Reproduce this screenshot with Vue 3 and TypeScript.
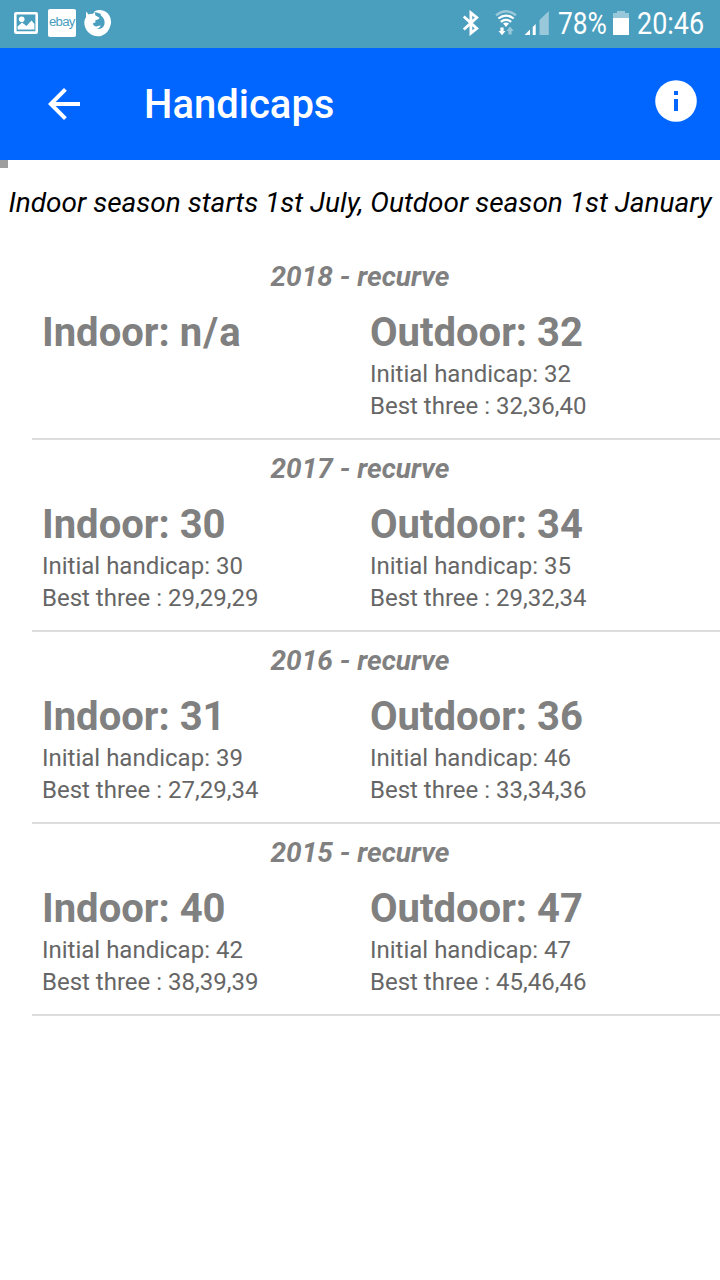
<script setup lang="ts">
interface Result {
  label: string
  value: string
  initial?: string
  best?: string
}
interface Season {
  title: string
  results: Result[]
}

const seasons: Season[] = [
  { title: '2018 - recurve', results: [
    { label: 'Indoor', value: 'n/a' },
    { label: 'Outdoor', value: '32', initial: '32', best: '32,36,40' },
  ] },
  { title: '2017 - recurve', results: [
    { label: 'Indoor', value: '30', initial: '30', best: '29,29,29' },
    { label: 'Outdoor', value: '34', initial: '35', best: '29,32,34' },
  ] },
  { title: '2016 - recurve', results: [
    { label: 'Indoor', value: '31', initial: '39', best: '27,29,34' },
    { label: 'Outdoor', value: '36', initial: '46', best: '33,34,36' },
  ] },
  { title: '2015 - recurve', results: [
    { label: 'Indoor', value: '40', initial: '42', best: '38,39,39' },
    { label: 'Outdoor', value: '47', initial: '47', best: '45,46,46' },
  ] },
]
</script>

<template>
  <div class="screen">
    <div class="status">
      <svg class="picture" width="24" height="23" viewBox="0 0 24 23">
        <path fill="#fff" fill-rule="evenodd" d="M2 0H22Q24 0 24 2V20Q24 22 22 22H2Q0 22 0 20V2Q0 0 2 0ZM2.6 2.4V19.2H21.4V2.4Z" />
        <circle cx="7.7" cy="7.2" r="2.8" fill="#fff" />
        <path fill="#fff" d="M3.6 17.6V14.5L8 10.5L12.5 14L17.5 8.5L20.4 12V17.6Z" />
      </svg>
      <div class="ebay"><span>ebay</span></div>
      <svg class="firefox" width="28" height="28" viewBox="0 0 28 28">
        <path fill="#fff" d="M2 2.6L4.8 5.4Q6.8 4.6 8.7 5L11 2.8L11.2 6.2L15.5 8.7Q15.4 10.4 11.2 11.2L11.6 13.2L8.8 14.6Q9.6 17.5 12.5 17.4Q15 16.5 16.8 16.4Q15.8 19 12.5 20Q18.8 20.6 20.4 15.5Q21.4 10 17 6.5L16.5 4.8L13.5 3.7L10 2.8Q12 .8 16 1Q22 1.4 25.2 6.2Q28 10.7 26.6 16Q24.4 24.8 17 27Q9.8 28.5 4 23Q.2 18.8 .3 13Q.6 9.8 2 8.2Z" />
      </svg>
      <div class="spacer"></div>
      <svg class="bluetooth" width="18" height="26" viewBox="0 0 18 26">
        <path fill="none" stroke="#fff" stroke-width="2.8" d="M1.8 6.5L14.8 18.5L8.9 23.2V2.8L14.8 7.5L1.8 19.5" />
      </svg>
      <svg class="wifi" width="22" height="26" viewBox="0 0 22 26">
        <path fill="none" stroke="#98c8da" stroke-width="2.4" d="M1 5.3Q11 -2.6 21 5.3" />
        <path fill="none" stroke="#fff" stroke-width="2.2" d="M3.3 8.5Q11 2.6 18.7 8.5M5.8 11.9Q11 8 16.2 11.9" />
        <path fill="#fff" d="M8 13.6Q11 11.5 14 13.6L11 17ZM5.4 17.5H8.6V21H10.5L7 25.3L3.5 21H5.4Z" />
        <path fill="#98c8da" d="M15 16.5L18.7 21H16.6V24.5H13.4V21H11.5Z" />
      </svg>
      <svg class="signal" width="26" height="25" viewBox="0 0 26 25">
        <path fill="#fff" d="M.5 24L6 18.5V24ZM8.7 16L11.7 13V24H8.7Z" />
        <path fill="#98c8da" d="M15.5 9L24.8 0V24H15.5Z" />
      </svg>
      <div class="percent"><span>78%</span></div>
      <svg class="battery" width="16" height="24" viewBox="0 0 16 24">
        <path fill="#98c8da" d="M4 0H12V2H16V7H0V2H4Z" />
        <path fill="#fff" d="M0 7H16V24H0Z" />
      </svg>
      <div class="clock"><span>20:46</span></div>
    </div>

    <header class="toolbar">
      <svg width="32" height="32" viewBox="4 4 16 16">
        <path fill="#fff" d="M20 11H7.83l5.59-5.59L12 4l-8 8 8 8 1.41-1.41L7.83 13H20v-2z" />
      </svg>
      <h1>Handicaps</h1>
      <svg class="info" width="42" height="42" viewBox="0 0 42 42">
        <circle cx="21" cy="21" r="20.8" fill="#fff" />
        <path fill="#06f" d="M19 11H23V15H19ZM19 19H23V31H19Z" />
      </svg>
    </header>

    <main>
      <div class="marker"></div>
      <p class="note">Indoor season starts 1st July, Outdoor season 1st January</p>
      <section v-for="season in seasons" :key="season.title">
        <h2>{{ season.title }}</h2>
        <div class="results">
          <div v-for="result in season.results" :key="result.label">
            <h3>{{ result.label }}: <span :class="{ unavailable: !result.initial }">{{ result.value }}</span></h3>
            <p v-if="result.initial">Initial handicap: {{ result.initial }}</p>
            <p v-if="result.best">Best three : {{ result.best }}</p>
          </div>
        </div>
      </section>
    </main>
  </div>
</template>

<style>
body { margin: 0; }
</style>

<style scoped>
.screen { width: 720px; height: 1280px; overflow: hidden; background: #fff; font-family: Roboto, sans-serif; }
h1, h2, h3, p { margin: 0; }
svg { display: block; flex: none; }
.status { height: 48px; display: flex; align-items: flex-start; box-sizing: border-box; padding-left: 14px; background: #4a9ebe; color: #fff; }
.picture { margin-top: 12px; }
.ebay { width: 28px; height: 28px; margin: 9px 0 0 10px; border-radius: 2px; background: #fff; color: #4a9ebe; }
.ebay span { display: block; width: 22px; margin-left: 1px; font: 12px/27px "Liberation Sans", sans-serif; letter-spacing: -.7px; transform: scaleX(1.1); transform-origin: left; }
.firefox { margin: 9px 0 0 8px; }
.spacer { flex: 1; }
.bluetooth { margin-top: 10px; }
.wifi { margin: 10px 0 0 15px; }
.signal { margin: 11px 0 0 7px; }
.percent, .clock { font-size: 31px; line-height: 48px; white-space: nowrap; }
.percent { width: 49px; margin-left: 8px; }
.clock { width: 83px; margin-left: 8px; }
.percent span, .clock span { display: inline-block; transform: scaleX(.87); transform-origin: left; }
.percent span { transform: scaleX(.85); }
.battery { margin: 11px 0 0 6px; }
.toolbar { height: 112px; display: flex; align-items: center; box-sizing: border-box; padding: 0 23px 0 48px; background: #06f; color: #fff; }
.toolbar h1 { flex: 1; margin-left: 64px; padding-top: 2px; font-size: 40px; font-weight: 500; line-height: 48px; }
.info { margin-top: -6px; }
.marker { width: 8px; height: 8px; background: #9e9e9e; }
.note { height: 80px; font-size: 28px; line-height: 70px; font-style: italic; text-align: center; white-space: nowrap; color: #000; }
section { height: 192px; box-sizing: border-box; margin-left: 32px; border-bottom: 2px solid #ddd; }
h2 { margin-left: -32px; padding-top: 13px; font-size: 28px; line-height: 32px; font-weight: 700; font-style: italic; text-align: center; color: #808080; }
.results { display: grid; grid-template-columns: 328px 1fr; padding: 16px 0 0 10px; }
h3 { font-size: 40px; line-height: 48px; font-weight: 700; color: #808080; }
.unavailable { letter-spacing: 1.2px; }
.results p { font-size: 24px; line-height: 32px; color: #666; }
.results h3 + p { margin-top: 1px; }
</style>
